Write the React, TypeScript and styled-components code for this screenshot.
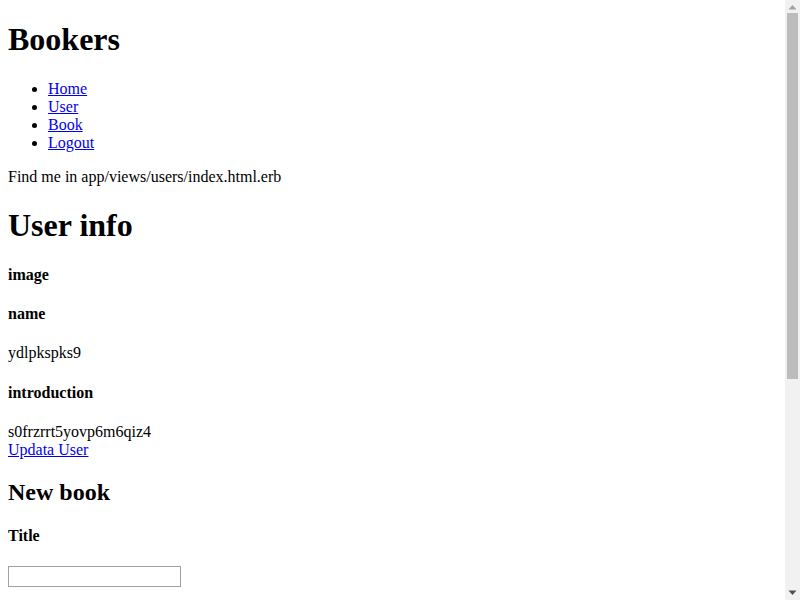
import React from "react";
import styled, { createGlobalStyle } from "styled-components";

const Global = createGlobalStyle`
  html { background: #fff; }
  body {
    margin: 0 8px 8px;
    font-family: "Liberation Serif", "Times New Roman", serif;
    font-size: 16px;
    color: #000;
  }
`;

const Title = styled.h1`
  font-size: 2em;
  font-weight: bold;
  margin: 0.67em 0;
`;

const SubTitle = styled.h2`
  font-size: 1.5em;
  font-weight: bold;
  margin: 0.83em 0;
`;

const Label = styled.h4`
  font-size: 1em;
  font-weight: bold;
  margin: 1.33em 0;
`;

const NavList = styled.ul`
  list-style: disc;
  margin: 1em 0;
  padding-left: 40px;
`;

const Link = styled.a`
  color: #0000ee;
  text-decoration: underline;
  cursor: pointer;
`;

const Para = styled.p`
  margin: 1em 0;
`;

const Block = styled.div``;

const TextInput = styled.input`
  font-family: Arial, sans-serif;
  font-size: 13.33px;
  width: 173px;
  height: 21px;
  box-sizing: border-box;
  border: 1px solid #a0a0a0;
  padding: 1px 2px;
  margin: 0;
`;

const TextArea = styled.textarea`
  font-family: "Liberation Mono", monospace;
  font-size: 13.33px;
  border: 1px solid #a0a0a0;
  padding: 2px;
  margin: 0;
`;

const Submit = styled.input`
  font-family: Arial, sans-serif;
  font-size: 13.33px;
  margin: 0;
`;

const Table = styled.table`
  border-collapse: separate;
  border-spacing: 2px;
`;

const Cell = styled.td`
  padding: 1px;
`;

const HeadCell = styled.th`
  padding: 1px;
  font-weight: bold;
`;

/* Browser scrollbar imitation, overlaid on the right edge of the 600px window */
const ScrollTrack = styled.div`
  position: absolute;
  top: 0;
  right: 0;
  width: 15px;
  height: 600px;
  background: #f1f1f1;
  display: grid;
  grid-template-rows: 15px 1fr 15px;
  z-index: 10;
`;

const ArrowSvg = styled.svg`
  display: block;
  width: 15px;
  height: 15px;
`;

const ThumbArea = styled.div`
  display: flex;
  justify-content: center;
`;

const Thumb = styled.div`
  width: 11px;
  height: 366px;
  margin-top: -2px;
  background: #bcbcbc;
`;

export default function App() {
  return (
    <>
      <Global />
      <Title>Bookers</Title>
      <NavList>
        <li><Link>Home</Link></li>
        <li><Link>User</Link></li>
        <li><Link>Book</Link></li>
        <li><Link>Logout</Link></li>
      </NavList>
      <Para>Find me in app/views/users/index.html.erb</Para>
      <Title>User info</Title>
      <Label>image</Label>
      <Label>name</Label>
      <Para>ydlpkspks9</Para>
      <Label>introduction</Label>
      <Block>s0frzrrt5yovp6m6qiz4</Block>
      <Link>Updata User</Link>
      <SubTitle>New book</SubTitle>
      <form onSubmit={(e) => e.preventDefault()}>
        <Label>Title</Label>
        <TextInput type="text" />
        <Label>Opinion</Label>
        <TextArea />
        <Block>
          <Submit type="submit" value="Create Book" />
        </Block>
      </form>
      <SubTitle>Books</SubTitle>
      <Table>
        <thead>
          <tr>
            <HeadCell></HeadCell>
            <HeadCell>Title</HeadCell>
            <HeadCell>Opinion</HeadCell>
          </tr>
        </thead>
        <tbody>
          <tr>
            <Cell></Cell>
            <Cell>book</Cell>
            <Cell>opinion</Cell>
          </tr>
        </tbody>
      </Table>
      <ScrollTrack aria-hidden="true">
        <ArrowSvg viewBox="0 0 15 15">
          <polygon points="3.5,9.5 11.5,9.5 7.5,5" fill="#a3a3a3" />
        </ArrowSvg>
        <ThumbArea>
          <Thumb />
        </ThumbArea>
        <ArrowSvg viewBox="0 0 15 15">
          <polygon points="3.5,5.5 11.5,5.5 7.5,10" fill="#505050" />
        </ArrowSvg>
      </ScrollTrack>
    </>
  );
}
